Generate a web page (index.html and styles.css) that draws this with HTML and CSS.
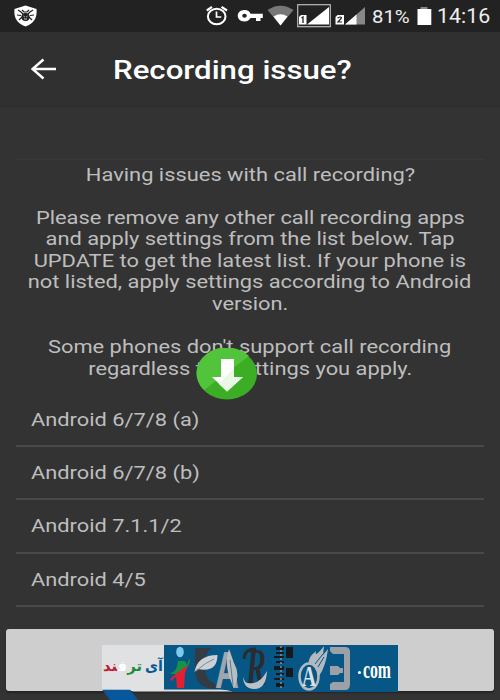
FILE: index.html
```html
<!DOCTYPE html>
<html lang="en">
<head>
<meta charset="utf-8">
<title>Recording issue?</title>
<link rel="stylesheet" href="styles.css">
</head>
<body>
<div class="screen">
  <header class="status">
    <svg class="status-icons" width="500" height="32" viewBox="0 0 500 32">
      <path d="M25.500 5.500L36.500 9Q38 22 25.500 26.500Q13 22 14.500 9Z" fill="#fff"/>
      <g fill="none" stroke="#222" stroke-width="1.200"><path d="M18 10l3 2 2 2M33 10l-3 2-2 2M17 15l4 .5M34 15l-4 .5M19 20l3-3M32 20l-3-3"/><ellipse cx="25.500" cy="17" rx="3.500" ry="3.500" fill="#222"/><path d="M22 10l2 2h3l2-2"/></g>
      <path d="M23.500 16l1.300 1M27.500 16l-1.300 1M24 19h3" stroke="#fff" stroke-width=".8"/>
      <g fill="none" stroke="#fff"><ellipse cx="216.700" cy="16.500" rx="8.800" ry="7.700" stroke-width="2"/><path d="M216.500 11.500v5.500h4.800" stroke-width="1.700"/><path d="M206.800 10.500l5.200-3.600M221.500 6.900l5.500 3.600" stroke-width="2.200"/></g>
      <path d="M244.500 10c3.300 0 5.300 1.700 6 3.700h12.300v4.300h-2.300v3h-4.500v-3h-5.500c-1 2-3 3.400-6 3.400-9 0-9-11.400 0-11.400z" fill="#fff"/><ellipse cx="244.500" cy="15.700" rx="2.300" ry="2" fill="#222"/>
      <path d="M267.500 10Q280.500 1.500 293.500 10L280.500 25.500Z" fill="#777"/><path d="M273.500 16.500Q280.500 12 287.500 16.500L280.500 25.500Z" fill="#fff"/>
      <rect x="297.700" y="4.700" width="32.600" height="22" fill="none" stroke="#bbb" stroke-width="1.200"/>
      <path d="M307 24.500L329 7v17.500ZM299 17l2-2h5.500v9.500H299Z" fill="#fff"/><path d="M301.500 18l1.500-1v6" fill="none" stroke="#222" stroke-width="1.300"/>
      <path d="M345 24.500L365 7v17.500Z" fill="#888"/><path d="M345 24.500L356.500 14.500v10ZM335.500 17l2-2h6.500v9.500h-8.500Z" fill="#fff"/><path d="M337.500 18q4-2 4 0L338 22h4" fill="none" stroke="#222" stroke-width="1.200"/>
      <path d="M420.500 7h7v3h-7z" fill="#888"/><path d="M417.500 9h13.800v16h-13.800z" fill="#fff"/>
    </svg>
    <span class="battery"><span class="wide">81%</span></span>
    <span class="clock"><span class="wide">14:16</span></span>
  </header>
  <nav class="bar">
    <svg class="back" width="26" height="22" viewBox="0 0 26 22"><path d="M12.500 1.500L1.500 11l11 9.500M1.500 11H25" fill="none" stroke="#fff" stroke-width="2.500"/></svg>
    <h1 class="wide">Recording issue?</h1>
  </nav>
  <main>
    <section class="intro">
      <p><span class="wide">Having issues with call recording?</span></p>
      <p>
        <span class="wide">Please remove any other call recording apps</span>
        <span class="wide">and apply settings from the list below. Tap</span>
        <span class="wide">UPDATE to get the latest list. If your phone is</span>
        <span class="wide">not listed, apply settings according to Android</span>
        <span class="wide">version.</span>
      </p>
      <p>
        <span class="wide">Some phones don't support call recording</span>
        <span class="wide">regardless the settings you apply.</span>
      </p>
      <svg class="badge" width="62" height="52" viewBox="0 0 62 52"><ellipse cx="31" cy="26" rx="30" ry="25.500" fill="#3bae25"/><path d="M53 8A30 25.500 0 0 0 8 42Z" fill="#51c43b"/><path d="M25 11h13v18h9L31 43.500 16 29h9Z" fill="#fff"/><path d="M38 20v9h9L31 43.500 23 36Z" fill="#e8f7e6"/></svg>
    </section>
    <ul class="versions">
      <li><span class="wide">Android 6/7/8 (a)</span></li>
      <li><span class="wide">Android 6/7/8 (b)</span></li>
      <li><span class="wide">Android 7.1.1/2</span></li>
      <li><span class="wide">Android 4/5</span></li>
    </ul>
  </main>
  <div class="update"></div>
  <svg class="logo" width="298" height="56" viewBox="101 644 298 56">
    <path d="M102 689.500h28l8 10.500h-28Z" fill="#07579a"/>
    <path d="M102 645h62v44.500h60l10 2H133l-3-2h-28Z" fill="#dfe1e3"/>
    <path d="M164 645h234v47H234q-6-2.500-14-2.500h-56Z" fill="#075786"/>
    <g class="persian"><text x="145" y="671" textLength="18" lengthAdjust="spacingAndGlyphs" fill="#075a94">آی</text><text x="103" y="671" textLength="39" lengthAdjust="spacingAndGlyphs"><tspan fill="#218b39">تر</tspan><tspan fill="#fff">ف</tspan><tspan fill="#c71932">ند</tspan></text></g>
    <ellipse cx="180" cy="652" rx="3.800" ry="5.300" fill="#7fc9ed"/>
    <path d="M170 673q7 0 8-12h7l2 4q2-7 3-6 0 7-8 15H172Z" fill="#159447"/><path d="M170 679q9-8 18-14l-3 8-1 15h-7l-1-11-5 4Z" fill="#e32032"/>
    <path d="M195 648h17q-7 3-7 18t12 19l-1 4q-21 0-21-20Z" fill="#343b43"/><path d="M194.500 672q3-17 23-17 0 18-20 14Z" fill="#cbd1d4"/><path d="M196 671q10-9 18-12" stroke="#738c9c" fill="none"/>
    <text x="215" y="688" class="plain" font-size="51" textLength="24" lengthAdjust="spacingAndGlyphs" fill="#9da6ac">A</text><path d="M229 649q-6 18 5 39 7-13 0-25Z" fill="#b8bfc2"/><path d="M230 660l3 25" stroke="#627987"/>
    <text x="246" y="685" class="script" font-size="52" textLength="20" lengthAdjust="spacingAndGlyphs" fill="#292d32">R</text><path d="M244 659q0-10 12-10" fill="none" stroke="#292d32" stroke-width="3"/><path d="M243 676q1 9 10 7 8-1 14-12-1 19-14 18-10-1-10-13Z" fill="#bac2c7"/>
    <g fill="#15191d"><path d="M276 647h8v3h-8zm0 5h8v2h-8zm-2 4h10v2h-10zm2 5h8v2h-8zm-2 5h10v4h-10zm2 7h8v2h-8zm-2 5h10v2h-10zm2 5h8v4h-8z"/><path d="M286 647h7v11h-7zM286 668h7v9h-7z"/></g><path d="M281 646v44" stroke="#82909a" stroke-width="1.500" stroke-dasharray="2 2"/>
    <path d="M309 665q-2-7 7-14-2 8 8-5l-1 9 5-6q-2 17-9 27Z" fill="#b2bac0"/><ellipse cx="309" cy="676.500" rx="9.500" ry="13" fill="#075786" stroke="#b2bac0" stroke-width="2.500"/><text x="302" y="686" class="serif" font-size="30" textLength="14" lengthAdjust="spacingAndGlyphs" fill="#dce1e3">A</text><path d="M315 664l8-10M318 667l6-10" stroke="#075786"/>
    <path d="M330 647h15q5 0 5 5v32q0 6-5 6h-15v-6l3-2h11v-28h-11l-3-3ZM330 666h8l2 2h3v5h-3l-2 2h-8Z" fill="#9ba1a6"/>
    <circle cx="359.500" cy="672.500" r="1.600" fill="#fff"/><text x="363" y="678" class="serif" font-size="26" textLength="28" lengthAdjust="spacingAndGlyphs" fill="#fff">com</text>
  </svg>
</div>
</body>
</html>
```
FILE: styles.css
```css
* { box-sizing: border-box; }
body { margin: 0; background: #333; font-family: Roboto, sans-serif; }
.screen { position: relative; width: 500px; height: 700px; overflow: hidden; background: #333; }
.wide { display: inline-block; white-space: nowrap; transform: scaleX(1.187); transform-origin: left center; }
.status { position: relative; height: 32px; background: #222; color: #eee; display: flex; line-height: 33px; }
.status-icons { position: absolute; left: 0; top: 0; }
.battery { margin-left: 372px; width: 65px; font-size: 18px; }
.battery .wide { transform: scaleX(1.13); }
.clock { font-size: 20px; }
.clock .wide { transform: scaleX(1.07); }
.bar { height: 75px; display: flex; align-items: center; padding-left: 31px; background: #303030; border-bottom: 1px solid #2b2b2b; }
.back { margin-right: 55.5px; }
h1 { margin: 2px 0 0; color: #fff; font-size: 26px; line-height: 32px; font-weight: 500; }
h1.wide { transform: scaleX(1.2); }
main { padding: 52px 16px 0; }
.intro { position: relative; height: 235px; border-top: 1px solid #393939; padding-top: 3.500px; color: #bebebe; font-size: 18.4px; line-height: 21.6px; }
.intro p { display: flex; flex-direction: column; align-items: center; margin: 0 0 21.600px; }
.intro .wide { transform: scaleX(1.189); transform-origin: center; }
.badge { position: absolute; left: 180px; top: 188px; }
.versions { list-style: none; margin: 0; padding: 0; color: #bebebe; font-size: 18.4px; }
.versions li { height: 53.200px; padding-left: 15px; line-height: 51px; border-bottom: 2px solid #494949; }
.update { margin: 22.5px 6px 0; height: 62px; border-radius: 3px; background: #cecece; box-shadow: 0 2px 2px #252525; }
.logo { position: absolute; left: 101px; top: 644px; }
.persian { font: bold 15px "DejaVu Sans", sans-serif; }
.plain { font-family: "Liberation Sans", sans-serif; font-weight: bold; }
.script { font-family: "Liberation Serif", serif; font-weight: bold; font-style: italic; }
.serif { font-family: "Liberation Serif", serif; font-weight: bold; }
```
